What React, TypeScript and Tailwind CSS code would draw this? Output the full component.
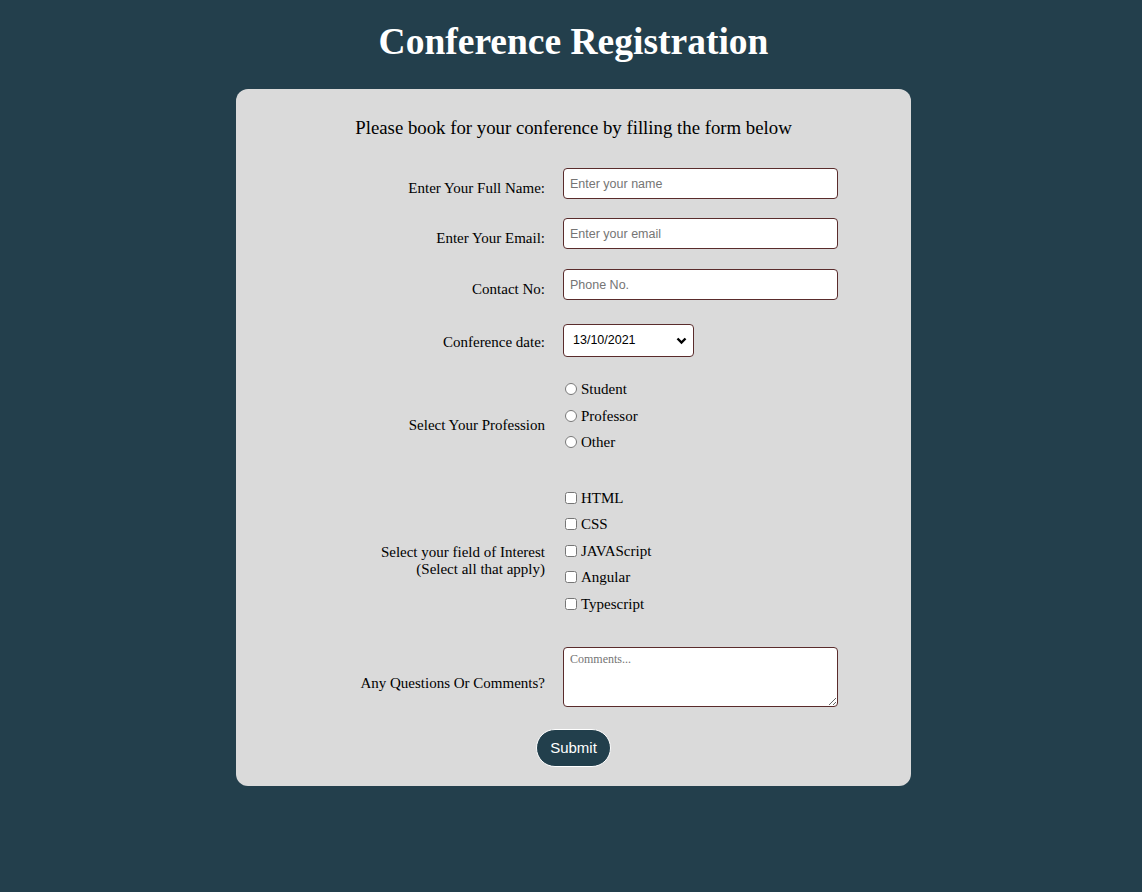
import React from "react";

const serif = { fontFamily: '"Liberation Serif", "Times New Roman", serif' };

function Label({ children, pt }: { children: React.ReactNode; pt: string }) {
  return (
    <div className={`w-[236px] shrink-0 text-right text-[15px] leading-5 text-black ${pt}`}>
      {children}
    </div>
  );
}

const textInput =
  "h-[31px] w-[275px] rounded-[4px] border border-[#5a2c2c] bg-white px-[6px] font-['Liberation_Sans',Arial,sans-serif] text-[12.5px] text-black outline-none placeholder:text-[#757575]";

export default function App() {
  return (
    <div className="min-h-[892px] w-full bg-[#233f4c] pl-[5px]" style={serif}>
      <h1 className="pt-[20px] text-center text-[37.5px] font-bold leading-[44px] text-white">
        Conference Registration
      </h1>

      <form className="mx-auto mt-[25px] flex w-[675px] flex-col rounded-xl bg-[#dadada] pb-[19px] pt-[27px]">
        <p className="text-center text-[18.8px] leading-6 text-black">
          Please book for your conference by filling the form below
        </p>

        <div className="mx-auto mt-[28px] flex w-[529px] flex-col">
          <div className="flex gap-[18px]">
            <Label pt="pt-[10px]">Enter Your Full Name:</Label>
            <input className={textInput} placeholder="Enter your name" />
          </div>

          <div className="mt-[19px] flex gap-[18px]">
            <Label pt="pt-[10px]">Enter Your Email:</Label>
            <input className={textInput} placeholder="Enter your email" />
          </div>

          <div className="mt-[20px] flex gap-[18px]">
            <Label pt="pt-[10px]">Contact No:</Label>
            <input className={textInput} placeholder="Phone No." />
          </div>

          <div className="mt-[24px] flex gap-[18px]">
            <Label pt="pt-[8px]">Conference date:</Label>
            <div className="relative">
              <select
                defaultValue="13/10/2021"
                className="h-[33px] w-[131px] appearance-none rounded-[4px] border border-[#5a2c2c] bg-white pl-[9px] font-['Liberation_Sans',Arial,sans-serif] text-[12.5px] text-black"
              >
                <option>13/10/2021</option>
                <option>14/10/2021</option>
                <option>15/10/2021</option>
              </select>
              <svg
                className="pointer-events-none absolute right-[7px] top-[13px]"
                width="11"
                height="8"
                viewBox="0 0 11 8"
              >
                <path d="M1.5 1.5 L5.5 5.5 L9.5 1.5" fill="none" stroke="#000" strokeWidth="2.4" />
              </svg>
            </div>
          </div>

          <div className="mt-[19px] flex gap-[18px]">
            <Label pt="pt-[39px]">Select Your Profession</Label>
            <div className="flex flex-col">
              {["Student", "Professor", "Other"].map((p) => (
                <label key={p} className="flex h-[26.5px] items-center text-[15px] text-black">
                  <input type="radio" name="profession" className="m-0 ml-[2px] mr-[4px] h-[12px] w-[12px]" />
                  {p}
                </label>
              ))}
            </div>
          </div>

          <div className="mt-[29px] flex gap-[18px]">
            <Label pt="pt-[59px]">
              <span className="block leading-[17px]">Select your field of Interest</span>
              <span className="block leading-[17px]">(Select all that apply)</span>
            </Label>
            <div className="flex flex-col">
              {["HTML", "CSS", "JAVAScript", "Angular", "Typescript"].map((f) => (
                <label key={f} className="flex h-[26.5px] items-center text-[15px] text-black">
                  <input type="checkbox" className="m-0 ml-[2px] mr-[4px] h-[12px] w-[12px]" />
                  {f}
                </label>
              ))}
            </div>
          </div>

          <div className="mt-[30px] flex gap-[18px]">
            <Label pt="pt-[26px]">Any Questions Or Comments?</Label>
            <textarea
              placeholder="Comments..."
              className="h-[60px] w-[275px] rounded-[4px] border border-[#5a2c2c] bg-white px-[6px] py-[4px] text-[12px] leading-[14px] text-black outline-none placeholder:text-[#757575]"
            />
          </div>
        </div>

        <div className="mt-[22px] flex justify-center">
          <button
            type="button"
            className="h-[38px] w-[75px] rounded-full border border-white bg-[#223f4c] font-['Liberation_Sans',Arial,sans-serif] text-[15px] text-white"
          >
            Submit
          </button>
        </div>
      </form>
    </div>
  );
}
